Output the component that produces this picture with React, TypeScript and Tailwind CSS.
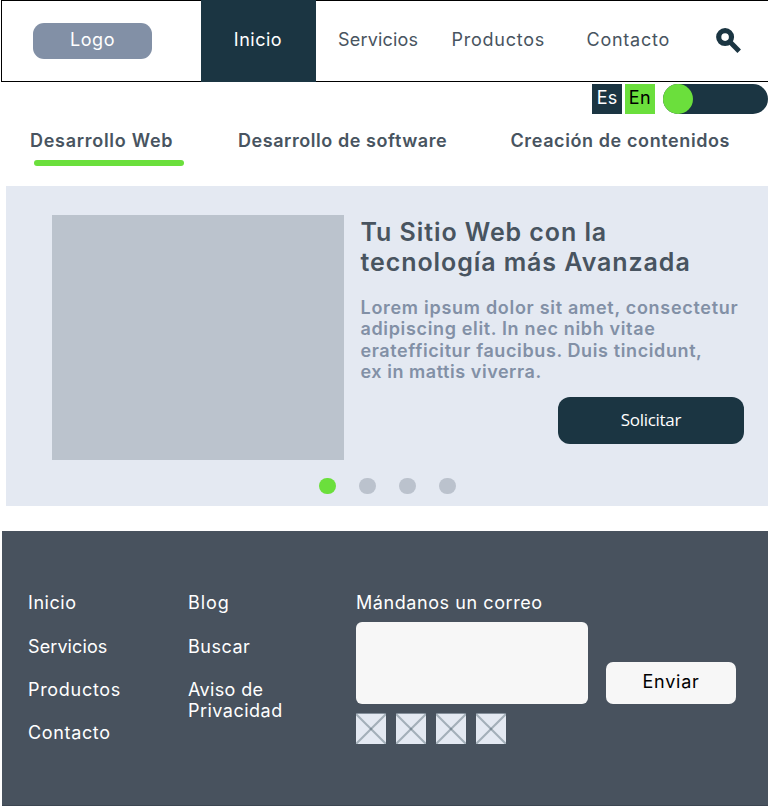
import React from 'react';

const footerLinks = [
  { label: 'Inicio', style: 'tracking-[0.55px]' },
  { label: 'Servicios', style: 'pt-px -mb-px tracking-[0.1px]' },
  { label: 'Productos', style: 'tracking-[0.7px]' },
  { label: 'Contacto', style: 'tracking-[0.65px]' },
];

function SearchIcon() {
  return (
    <svg width="26" height="26" viewBox="0 0 26 26" fill="none" stroke="#1b3542">
      <circle cx="9.1" cy="9.1" r="6.4" strokeWidth="5.2" />
      <path d="M13.6 13.6L23.2 23.2" strokeWidth="5" />
    </svg>
  );
}

function Placeholder() {
  return (
    <svg width="30" height="31" viewBox="0 0 30 31">
      <rect width="30" height="31" fill="#e4e9f2" />
      <rect width="30" height="1" fill="#85909c" />
      <path d="M0 1L30 31" stroke="#1b3542" strokeOpacity="0.32" strokeWidth="2" />
      <path d="M30 1L0 31" stroke="#1b3542" strokeOpacity="0.32" strokeWidth="2" />
    </svg>
  );
}

function Header() {
  return (
    <header className="ml-px flex h-[82px] items-stretch border-y border-l border-black text-[#485460]">
      <div className="flex w-[198.5px] items-center pl-[31px]">
        <div className="flex h-9 w-[119px] items-center justify-center rounded-[11px] bg-[#8290a6] pb-[2px] tracking-[0.6px] text-white">Logo</div>
      </div>
      <nav className="flex items-stretch">
        <a className="-my-px flex w-[115px] items-center justify-center bg-[#1b3542] pb-[3px] tracking-[0.5px] text-white">Inicio</a>
        <a className="ml-[22.5px] flex w-[113.5px] items-center pb-[3px] tracking-[0.2px]">Servicios</a>
        <a className="flex w-[135px] items-center pb-[3px] tracking-[0.75px]">Productos</a>
        <a className="flex w-[129.5px] items-center pb-[3px] tracking-[0.75px]">Contacto</a>
      </nav>
      <button className="mt-[27px] h-[26px]" aria-label="Buscar"><SearchIcon /></button>
    </header>
  );
}

export default function App() {
  return (
    <div className="h-[806px] w-[768px] overflow-hidden bg-white font-['Inter',sans-serif] text-[18px] leading-[22px] whitespace-nowrap">
      <Header />
      <div className="mt-[2px] flex h-[30px] justify-end">
        <span className="flex w-[30px] items-center justify-center bg-[#1b3542] pb-[2px] text-white">Es</span>
        <span className="ml-[3px] flex w-[30px] items-center justify-center bg-[#6bdf3c] pb-[2px] tracking-[0.5px] text-black">En</span>
        <button className="ml-2 w-[105px] rounded-full bg-[#1b3542]" aria-label="Idioma">
          <span className="block size-[30px] rounded-full bg-[#6bdf3c]" />
        </button>
      </div>
      <nav className="flex h-[72px] pt-4 pl-[30px] font-semibold text-[#485460]">
        <div className="w-[208px] tracking-[0.72px]">
          Desarrollo Web
          <div className="mt-2 ml-1 h-[6px] w-[150.4px] rounded-full bg-[#6bdf3c]" />
        </div>
        <div className="w-[272.5px] tracking-[0.56px]">Desarrollo de software</div>
        <div className="tracking-[0.6px]">Creación de contenidos</div>
      </nav>
      <section className="ml-[6px] h-80 bg-[#e4e9f2] pt-[29px]">
        <div className="flex h-[245px] pl-[46px]">
          <div className="w-[292px] bg-[#bbc3cd]" />
          <div className="flex w-[400px] flex-col pl-[16.5px]">
            <h1 className="mt-[2px] text-[25px] leading-[30px] font-semibold tracking-[0.92px] text-[#485460]">
              Tu Sitio Web con la<br />tecnología más Avanzada
            </h1>
            <p className="mt-5 text-[18px] leading-[21.3px] font-semibold text-[#8290a6]">
              <span className="tracking-[0.71px]">Lorem ipsum dolor sit amet, consectetur</span><br />
              <span className="tracking-[0.65px]">adipiscing elit. In nec nibh vitae</span><br />
              <span className="tracking-[0.61px]">eratefficitur faucibus. Duis tincidunt,</span><br />
              <span className="tracking-[0.55px]">ex in mattis viverra.</span>
            </p>
            <button className="mt-[15px] h-[47px] w-[186px] self-end rounded-xl bg-[#1b3542] pb-[2px] font-['Open_Sans',sans-serif] text-[17px] font-medium tracking-[-0.3px] text-white">Solicitar</button>
          </div>
        </div>
        <div className="mt-[18px] ml-[313px] flex gap-[23px]">
          <span className="h-4 w-[17px] rounded-full bg-[#6bdf3c]" />
          <span className="h-4 w-[17px] rounded-full bg-[#bbc2cd]" />
          <span className="h-4 w-[17px] rounded-full bg-[#bbc2cd]" />
          <span className="h-4 w-[17px] rounded-full bg-[#bbc2cd]" />
        </div>
      </section>
      <footer className="mt-[25px] ml-[2px] flex h-[275px] border-b border-[#3c4652] bg-[#48525e] pt-[61px] pl-[26px] text-white">
        <ul className="flex w-40 flex-col gap-[21.3px]">
          {footerLinks.map((link) => <li key={link.label} className={link.style}>{link.label}</li>)}
        </ul>
        <ul className="flex w-[168px] flex-col gap-[21.3px]">
          <li className="tracking-[0.9px]">Blog</li>
          <li className="-mb-px pt-px tracking-[0.5px]">Buscar</li>
          <li className="leading-[21px]"><span className="tracking-[0.35px]">Aviso de</span><br /><span className="tracking-[0.48px]">Privacidad</span></li>
        </ul>
        <form>
          <label className="block h-[30px] tracking-[0.57px]">Mándanos un correo</label>
          <div className="flex items-end gap-[18px]">
            <div className="h-[82px] w-[232px] rounded-[6px] bg-[#f7f7f7]" />
            <button type="button" className="h-[42px] w-[130px] rounded-[7px] bg-[#f7f7f7] pb-[2px] tracking-[0.75px] text-black">Enviar</button>
          </div>
          <div className="mt-[9px] flex gap-[10px]">
            <Placeholder /><Placeholder /><Placeholder /><Placeholder />
          </div>
        </form>
      </footer>
    </div>
  );
}
